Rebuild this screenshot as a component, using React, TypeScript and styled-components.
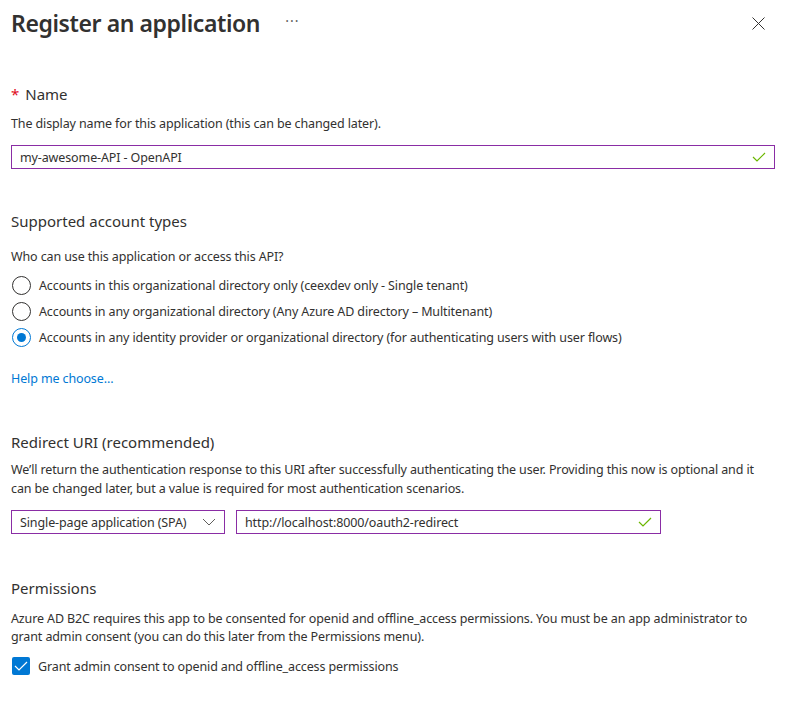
import React from "react";
import styled, { createGlobalStyle } from "styled-components";

const Global = createGlobalStyle`
  html, body { margin: 0; padding: 0; background: #fff; }
  body {
    font-family: "Segoe UI", "Noto Sans", sans-serif;
    color: #323130;
    -webkit-font-smoothing: antialiased;
  }
  * { box-sizing: border-box; }
`;

const Page = styled.div`
  width: 788px;
  height: 704px;
  padding: 0 13px 0 11px;
  display: flex;
  flex-direction: column;
`;

const Header = styled.header`
  display: flex;
  align-items: center;
  height: 46px;
`;

const Title = styled.h1`
  margin: 0;
  font-size: 23px;
  letter-spacing: -0.4px;
  font-weight: 600;
  color: #323130;
  line-height: 32px;
`;

const More = styled.span`
  margin-left: 25px;
  color: #605e5c;
  font-size: 14px;
  letter-spacing: 1px;
  line-height: 1;
  transform: translateY(-2px);
`;

const Close = styled.button`
  margin-left: auto;
  margin-right: 10px;
  border: 0;
  background: none;
  padding: 0;
  width: 14px;
  height: 14px;
  display: flex;
  align-items: center;
  justify-content: center;
  cursor: pointer;
`;

const Section = styled.section<{ $top: number }>`
  margin-top: ${(p) => p.$top}px;
  display: flex;
  flex-direction: column;
`;

const Heading = styled.h2`
  margin: 0;
  font-size: 15px;
  font-weight: 400;
  line-height: 20px;
  color: #323130;
`;

const Required = styled.span`
  color: #e00b1c;
  margin-right: 6px;
`;

const Help = styled.p<{ $top?: number; $lh?: number }>`
  margin: ${(p) => p.$top ?? 9}px 0 0;
  font-size: 12.5px;
  letter-spacing: -0.12px;
  line-height: ${(p) => p.$lh ?? 19}px;
  color: #323130;
`;

const Field = styled.div<{ $width?: number }>`
  height: 24px;
  width: ${(p) => (p.$width ? `${p.$width}px` : "100%")};
  border: 1px solid #8a2da5;
  display: flex;
  align-items: center;
  padding: 0 8px;
  font-size: 12.5px;
  letter-spacing: -0.12px;
  color: #323130;
`;

const FieldValue = styled.span`
  flex: 1;
`;

const InputRow = styled.div<{ $top?: number }>`
  margin-top: ${(p) => p.$top ?? 13}px;
  display: flex;
  gap: 11px;
`;

const RadioList = styled.div`
  margin-top: 6px;
  display: flex;
  flex-direction: column;
`;

const RadioRow = styled.label`
  display: flex;
  align-items: center;
  height: 26px;
  font-size: 12.5px;
  letter-spacing: -0.12px;
  gap: 8px;
`;

const RadioDot = styled.span<{ $on?: boolean }>`
  width: 19px;
  height: 19px;
  margin-left: 1px;
  border-radius: 50%;
  border: 1px solid ${(p) => (p.$on ? "#0078d4" : "#323130")};
  display: flex;
  align-items: center;
  justify-content: center;
  &::after {
    content: "";
    width: 9px;
    height: 9px;
    border-radius: 50%;
    background: ${(p) => (p.$on ? "#0078d4" : "transparent")};
  }
`;

const Link = styled.a`
  margin-top: 19px;
  font-size: 12.5px;
  letter-spacing: -0.12px;
  line-height: 19px;
  color: #0078d4;
  text-decoration: none;
`;

const CheckRow = styled.label`
  margin-top: 11px;
  display: flex;
  align-items: center;
  gap: 8px;
  font-size: 12.5px;
  letter-spacing: -0.12px;
`;

const CheckBox = styled.span`
  width: 18px;
  height: 18px;
  margin-left: 1px;
  border-radius: 2px;
  background: #0078d4;
  display: flex;
  align-items: center;
  justify-content: center;
`;

const Check = ({ color = "#6bb700" }: { color?: string }) => (
  <svg width="14" height="10" viewBox="0 0 14 10" fill="none">
    <path d="M1 5l4 4 8-8" stroke={color} strokeWidth="1.2" />
  </svg>
);

const Chevron = () => (
  <svg width="14" height="8" viewBox="0 0 14 8" fill="none">
    <path d="M1 1l6 6 6-6" stroke="#605e5c" strokeWidth="1" />
  </svg>
);

export default function App() {
  return (
    <>
      <Global />
      <Page>
        <Header>
          <Title>Register an application</Title>
          <More>···</More>
          <Close aria-label="Close">
            <svg width="13" height="13" viewBox="0 0 13 13" fill="none">
              <path d="M0.5 0.5l12 12M12.5 0.5l-12 12" stroke="#323130" strokeWidth="1" />
            </svg>
          </Close>
        </Header>

        <Section $top={38}>
          <Heading>
            <Required>*</Required>Name
          </Heading>
          <Help $top={10}>The display name for this application (this can be changed later).</Help>
          <InputRow $top={12}>
            <Field>
              <FieldValue>my-awesome-API - OpenAPI</FieldValue>
              <Check />
            </Field>
          </InputRow>
        </Section>

        <Section $top={42}>
          <Heading>Supported account types</Heading>
          <Help $top={16}>Who can use this application or access this API?</Help>
          <RadioList>
            <RadioRow>
              <RadioDot />
              Accounts in this organizational directory only (ceexdev only - Single tenant)
            </RadioRow>
            <RadioRow>
              <RadioDot />
              Accounts in any organizational directory (Any Azure AD directory – Multitenant)
            </RadioRow>
            <RadioRow>
              <RadioDot $on />
              Accounts in any identity provider or organizational directory (for authenticating users with user flows)
            </RadioRow>
          </RadioList>
          <Link href="#">Help me choose...</Link>
        </Section>

        <Section $top={44}>
          <Heading>Redirect URI (recommended)</Heading>
          <Help $top={8}>
            We’ll return the authentication response to this URI after successfully authenticating the user. Providing this now is optional and it
            can be changed later, but a value is required for most authentication scenarios.
          </Help>
          <InputRow $top={12}>
            <Field $width={214}>
              <FieldValue>Single-page application (SPA)</FieldValue>
              <Chevron />
            </Field>
            <Field $width={425}>
              <FieldValue>http://localhost:8000/oauth2-redirect</FieldValue>
              <Check />
            </Field>
          </InputRow>
        </Section>

        <Section $top={44}>
          <Heading>Permissions</Heading>
          <Help $top={12} $lh={18}>
            Azure AD B2C requires this app to be consented for openid and offline_access permissions. You must be an app administrator to
            grant admin consent (you can do this later from the Permissions menu).
          </Help>
          <CheckRow>
            <CheckBox>
              <Check color="#fff" />
            </CheckBox>
            Grant admin consent to openid and offline_access permissions
          </CheckRow>
        </Section>
      </Page>
    </>
  );
}
